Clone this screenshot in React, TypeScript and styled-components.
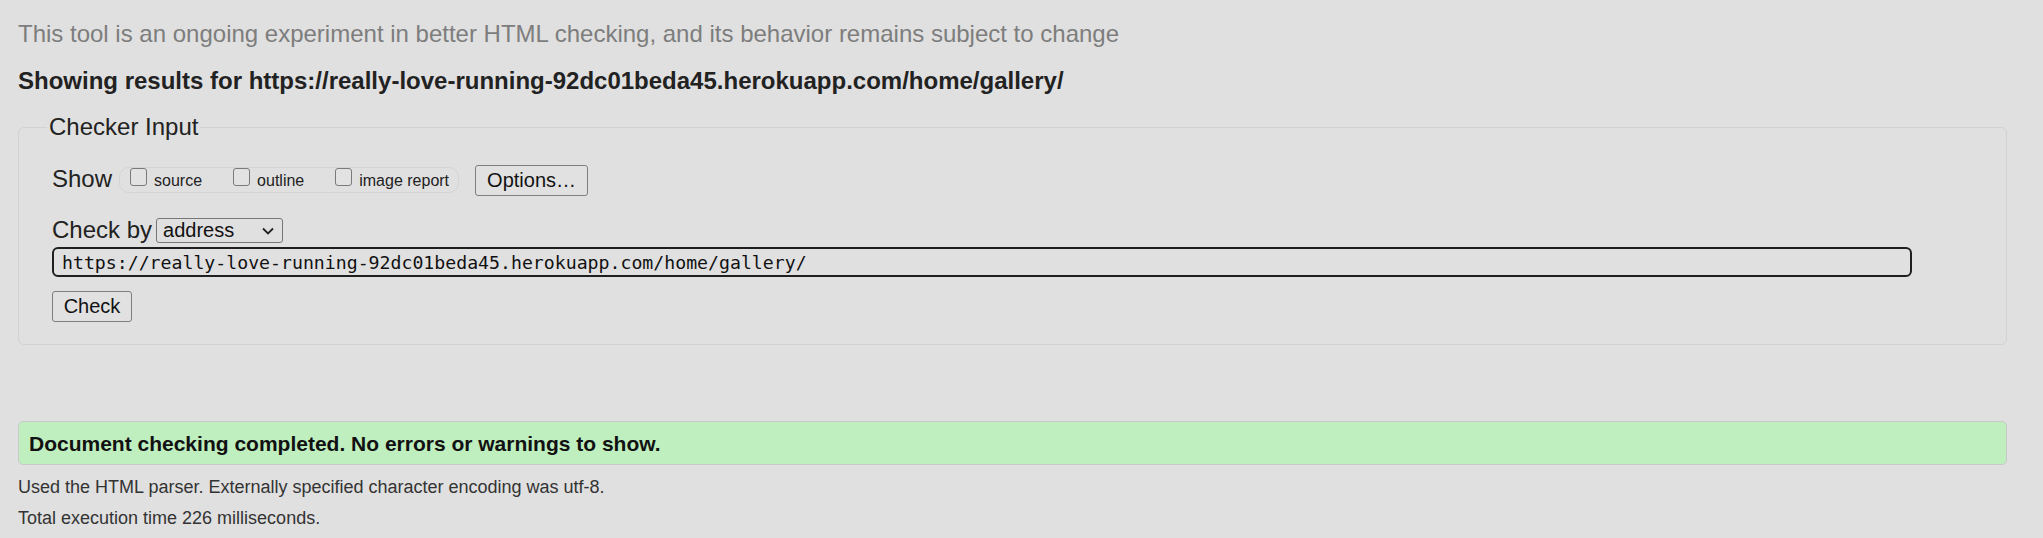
import React from "react";
import styled, { createGlobalStyle } from "styled-components";

const GlobalStyle = createGlobalStyle`
  *, *::before, *::after { box-sizing: border-box; }
  html, body { margin: 0; padding: 0; }
  body {
    background: #e0e0e0;
    font-family: "Liberation Sans", Arial, sans-serif;
    color: #222;
  }
`;

const Page = styled.main`
  padding: 20px 36px 0 18px;
`;

const Intro = styled.p`
  margin: 0;
  font-size: 24px;
  line-height: 28px;
  color: #7d7d7d;
`;

const Heading = styled.h2`
  margin: 19px 0 0;
  font-size: 24px;
  line-height: 28px;
  font-weight: bold;
  color: #222;
`;

const Fieldset = styled.fieldset`
  margin: 18px 0 0;
  min-width: 0;
  border: 1px solid #d2d2d2;
  border-radius: 6px;
  padding: 24px 0 22px 33px;
`;

const Legend = styled.legend`
  margin-left: -5px;
  padding: 0 2px;
  font-size: 24px;
  line-height: 28px;
  color: #222;
`;

const Row = styled.div<{ $top?: number }>`
  display: flex;
  align-items: flex-start;
  margin-top: ${(p) => p.$top ?? 0}px;
`;

const Label = styled.span<{ $shift?: number }>`
  font-size: 24px;
  line-height: 28px;
  color: #222;
  margin-top: ${(p) => p.$shift ?? 0}px;
`;

const CheckGroup = styled.div`
  display: flex;
  align-items: flex-start;
  gap: 31px;
  margin: 2px 0 0 7px;
  height: 26px;
  padding: 0 9px 0 10px;
  border: 1px solid #d4d4d4;
  border-radius: 10px;
`;

const CheckItem = styled.label`
  display: flex;
  align-items: flex-start;
  gap: 7px;
`;

const Box = styled.span`
  display: block;
  width: 17px;
  height: 18px;
  border: 1px solid #7a7a7a;
  border-radius: 3px;
  background: #e2e2e2;
`;

const SmallText = styled.span`
  margin-top: 4px;
  font-size: 16px;
  line-height: 18px;
  color: #222;
`;

const Button = styled.button<{ $w: number; $h: number; $left?: number }>`
  width: ${(p) => p.$w}px;
  height: ${(p) => p.$h}px;
  margin-left: ${(p) => p.$left ?? 0}px;
  padding: 0;
  border: 1px solid #7f7f7f;
  border-radius: 3px;
  background: #e1e1e1;
  font-family: "Liberation Sans", Arial, sans-serif;
  font-size: 20px;
  color: #111;
  display: flex;
  align-items: center;
  justify-content: center;
`;

const SelectBox = styled.div`
  display: flex;
  align-items: center;
  justify-content: space-between;
  width: 127px;
  height: 25px;
  margin: 2px 0 0 4px;
  padding: 0 8px 0 6px;
  border: 1px solid #777;
  border-radius: 3px;
  font-size: 20px;
  line-height: 23px;
  color: #111;
`;

const UrlInput = styled.input`
  display: block;
  width: 1860px;
  height: 30px;
  margin-top: 3px;
  padding: 0 8px;
  border: 2px solid #1f1f1f;
  border-radius: 6px;
  background: transparent;
  font-family: "DejaVu Sans Mono", "Liberation Mono", monospace;
  font-size: 18.2px;
  color: #111;
  outline: none;
`;

const ButtonRow = styled.div`
  margin-top: 14px;
`;

const Success = styled.div`
  margin-top: 76px;
  padding: 9px 10px 8px;
  border: 1px solid #c9c9c9;
  border-radius: 5px;
  background: #bfeebf;
  font-size: 21px;
  line-height: 25px;
  font-weight: bold;
  color: #111;
`;

const Note = styled.p<{ $top: number }>`
  margin: ${(p) => p.$top}px 0 0;
  font-size: 18px;
  line-height: 22px;
  color: #333;
`;

const Chevron = () => (
  <svg width="12" height="8" viewBox="0 0 12 8" aria-hidden="true">
    <polyline points="1,1.5 6,6.5 11,1.5" fill="none" stroke="#222" strokeWidth="1.8" />
  </svg>
);

const options = ["source", "outline", "image report"];

export default function App() {
  return (
    <>
      <GlobalStyle />
      <Page>
        <Intro>
          This tool is an ongoing experiment in better HTML checking, and its behavior remains subject to change
        </Intro>
        <Heading>Showing results for https://really-love-running-92dc01beda45.herokuapp.com/home/gallery/</Heading>
        <Fieldset>
          <Legend>Checker Input</Legend>
          <Row>
            <Label>Show</Label>
            <CheckGroup>
              {options.map((o) => (
                <CheckItem key={o}>
                  <Box />
                  <SmallText>{o}</SmallText>
                </CheckItem>
              ))}
            </CheckGroup>
            <Button $w={113} $h={31} $left={16}>
              Options…
            </Button>
          </Row>
          <Row $top={20}>
            <Label>Check by</Label>
            <SelectBox>
              <span>address</span>
              <Chevron />
            </SelectBox>
          </Row>
          <UrlInput
            readOnly
            defaultValue="https://really-love-running-92dc01beda45.herokuapp.com/home/gallery/"
          />
          <ButtonRow>
            <Button $w={80} $h={31}>
              Check
            </Button>
          </ButtonRow>
        </Fieldset>
        <Success>Document checking completed. No errors or warnings to show.</Success>
        <Note $top={11}>Used the HTML parser. Externally specified character encoding was utf-8.</Note>
        <Note $top={9}>Total execution time 226 milliseconds.</Note>
      </Page>
    </>
  );
}
